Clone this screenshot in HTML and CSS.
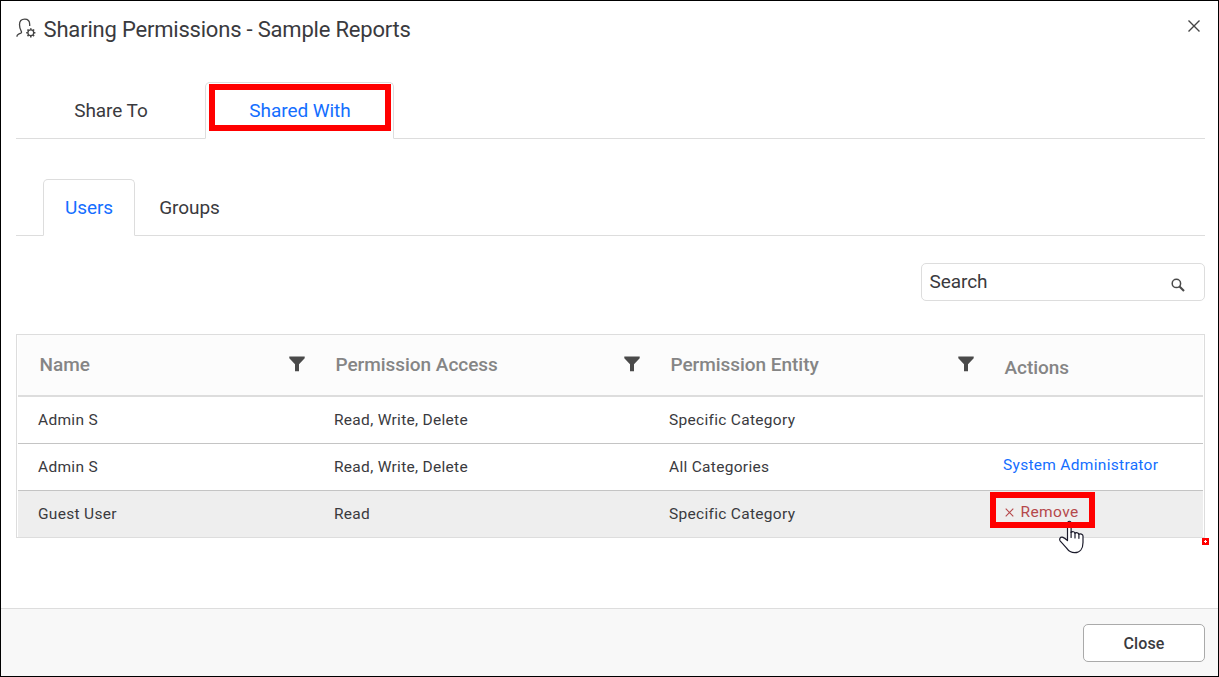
FILE: index.html
```html
<!DOCTYPE html>
<html lang="en">
<head>
<meta charset="utf-8">
<title>Sharing Permissions</title>
<link rel="stylesheet" href="styles.css">
</head>
<body>
<div class="dialog">
  <header class="dialog-header">
    <svg class="user-icon" width="20" height="20" viewBox="0 0 20 20" fill="none" stroke="#444" stroke-width="1.300">
      <path d="M1 18.800v-.7c0-.9.6-1.500 1.600-2l2.200-1c.8-.4.9-1 .5-1.800C4.300 11.600 3.500 10 3.500 6.800 3.500 3 5.300 1.200 8.700 1.200c3.300 0 5 2 5 5.300v1.600"/>
      <circle cx="14.800" cy="14.800" r="2.900"/>
      <path stroke-width="1.600" d="M14.800 10.200v1.600M14.800 17.800v1.600M10.200 14.800h1.600M17.800 14.800h1.600M11.500 11.500l1.100 1.100M17 17l1.100 1.100M11.500 18.100l1.100-1.100M17 12.600l1.100-1.100"/>
    </svg>
    <h1 class="title">Sharing Permissions - Sample Reports</h1>
    <svg class="dismiss" width="12" height="12" viewBox="0 0 12 12" stroke="#444" stroke-width="1.400"><path d="M.5.500l11 11M11.500.500l-11 11"/></svg>
  </header>

  <nav class="tabs main-tabs">
    <a class="tab">Share To</a>
    <a class="tab active">Shared With<span class="mark mark-tab"></span></a>
  </nav>
  <nav class="tabs sub-tabs">
    <a class="tab active">Users</a>
    <a class="tab">Groups</a>
  </nav>

  <div class="search">
    <span class="search-text">Search</span>
    <svg class="search-icon" width="14" height="14" viewBox="0 0 14 14" fill="none" stroke="#4a4a4a"><circle cx="5.400" cy="5.400" r="4.200" stroke-width="1.500"/><path d="M8.500 8.500l4.500 4.500" stroke-width="2.100"/></svg>
  </div>

  <div class="grid">
    <div class="row head">
      <div class="cell">Name<svg class="funnel" width="16" height="16" viewBox="0 0 16 16" fill="#4a4a4a"><path d="M.3.500h15.400v1.700L10 8.300v7H6v-7L.3 2.200z"/></svg></div>
      <div class="cell">Permission Access<svg class="funnel" width="16" height="16" viewBox="0 0 16 16" fill="#4a4a4a"><path d="M.3.500h15.400v1.700L10 8.300v7H6v-7L.3 2.200z"/></svg></div>
      <div class="cell">Permission Entity<svg class="funnel" width="16" height="16" viewBox="0 0 16 16" fill="#4a4a4a"><path d="M.3.500h15.400v1.700L10 8.300v7H6v-7L.3 2.200z"/></svg></div>
      <div class="cell actions">Actions</div>
    </div>
    <div class="row">
      <div class="cell">Admin S</div><div class="cell">Read, Write, Delete</div><div class="cell">Specific Category</div><div class="cell actions"></div>
    </div>
    <div class="row">
      <div class="cell">Admin S</div><div class="cell">Read, Write, Delete</div><div class="cell">All Categories</div><div class="cell actions"><a class="owner">System Administrator</a></div>
    </div>
    <div class="row hover">
      <div class="cell">Guest User</div><div class="cell">Read</div><div class="cell">Specific Category</div>
      <div class="cell actions"><a class="remove"><svg width="9" height="9" viewBox="0 0 9 9" stroke="#b5484b" stroke-width="1.100"><path d="M.7.700l7.600 7.600M8.300.700L.7 8.300"/></svg>Remove</a>
        <svg class="cursor" width="27" height="34" viewBox="0 0 27 34" fill="#fff" stroke="#1a1a2a" stroke-width="1.200" stroke-linejoin="round" stroke-linecap="round"><path d="M8.500 20.500V3.500c0-3 3.600-3 3.600 0v9c1-1.300 3.800-1 3.900.8 1-1 3.800-.7 3.900 1 1.200-.8 4.100-.4 4.100 1.800v6.400c0 6-3 10.200-8.300 10.200-4 0-6.300-2-8.300-4.900L1.100 20.800c-1-1.800 0-3.700 2-3.600 1.800.2 3.200 1.400 5.400 3.300z"/><path fill="none" d="M12.100 12v5.500M16 13v5M19.900 14.300v4"/></svg>
        <span class="mark mark-remove"></span>
      </div>
    </div>
    <svg class="handle" width="7" height="7" viewBox="0 0 7 7"><path fill="#f00" d="M0 0h7v7H0z"/><path fill="#fff" d="M3 2h1v1h1v1H4v1H3V4H2V3h1z"/></svg>
  </div>

  <footer class="dialog-footer"><button class="close-button">Close</button></footer>
</div>
</body>
</html>
```

FILE: styles.css
```css
* { box-sizing: border-box; }
body { margin: 0; font-family: Roboto, sans-serif; color: #3a3a3e; background: #fff; }
.dialog { width: 1219px; height: 677px; border: 1px solid #000; display: flex; flex-direction: column; overflow: hidden; }
.dialog-header { height: 81px; flex: none; padding: 16px 18px 0 15px; display: flex; align-items: flex-start; }
.user-icon { margin-top: 1px; }
.title { margin: 0 auto 0 7.6px; font-size: 22px; line-height: 26px; font-weight: 400; letter-spacing: -.2px; white-space: nowrap; }
.dismiss { margin-top: 3px; }

.tabs { flex: none; display: flex; margin: 0 13px 0 15px; border-bottom: 1px solid #ddd; font-size: 19px; letter-spacing: -.06px; }
.tab { position: relative; height: 57px; margin-bottom: -1px; display: flex; align-items: center; justify-content: center; border: 1px solid transparent; white-space: nowrap; }
.tab.active { color: #146eff; background: #fff; border-color: #ddd; border-bottom-color: #fff; border-radius: 5px 5px 0 0; }
.main-tabs .tab { width: 189px; padding-left: 1px; }
.sub-tabs { margin-top: 40px; padding-left: 27px; }
.sub-tabs .tab { width: 92px; }
.sub-tabs .tab + .tab { width: 109px; }
.mark { position: absolute; border: 6px solid #f00; }
.mark-tab { left: 3px; top: 1px; width: 182px; height: 47px; }

.search { flex: none; width: 284px; height: 38px; margin: 27px 13px 0 auto; padding: 0 19.500px 0 7.500px; border: 1px solid #ddd; border-radius: 5px; display: flex; justify-content: space-between; font-size: 19px; line-height: 36px; letter-spacing: -.06px; }
.search-icon { margin-top: 13.500px; }

.grid { position: relative; flex: none; margin: 33px 13px 0 15px; border: 1px solid #ddd; }
.row { display: grid; grid-template-columns: 295px 335px 334px 1fr; height: 47px; margin: 0 1px; border-bottom: 1px solid #c4c4c4; font-size: 15.500px; letter-spacing: .3px; }
.row:nth-child(4) { border-bottom: 0; height: 46px; }
.cell { position: relative; padding-left: 21px; display: flex; align-items: center; white-space: nowrap; }
.cell:first-child { padding-left: 20px; }
.head { height: 62px; border-bottom: 2px solid #ddd; background: #fcfcfc; color: #858585; font-size: 19px; font-weight: 500; letter-spacing: -.04px; }
.head .cell { padding: 0 8.500px 2px 22.500px; justify-content: space-between; }
.head .cell:first-child { padding-left: 21.500px; }
.row .actions { padding-bottom: 4px; }
.head .cell.actions { padding-top: 4px; padding-bottom: 0; }
.hover { background: #eee; }
.owner { color: #146eff; }
.remove { color: #b5484b; display: flex; align-items: center; gap: 6.500px; padding-left: 2px; letter-spacing: .4px; }
.mark-remove { left: 8px; top: 1px; width: 105px; height: 36px; }
.cursor { position: absolute; left: 77px; top: 29px; }
.handle { position: absolute; right: -5px; bottom: -8px; }

.dialog-footer { margin-top: auto; height: 68px; flex: none; padding: 15px 13px 0; display: flex; justify-content: flex-end; align-items: flex-start; border-top: 1px solid #ddd; background: #f8f8f8; }
.close-button { width: 122px; height: 38px; border: 1px solid #aaa; border-radius: 5px; background: #fff; color: #3a3a3e; font: 500 16px Roboto, sans-serif; letter-spacing: .1px; }
```
